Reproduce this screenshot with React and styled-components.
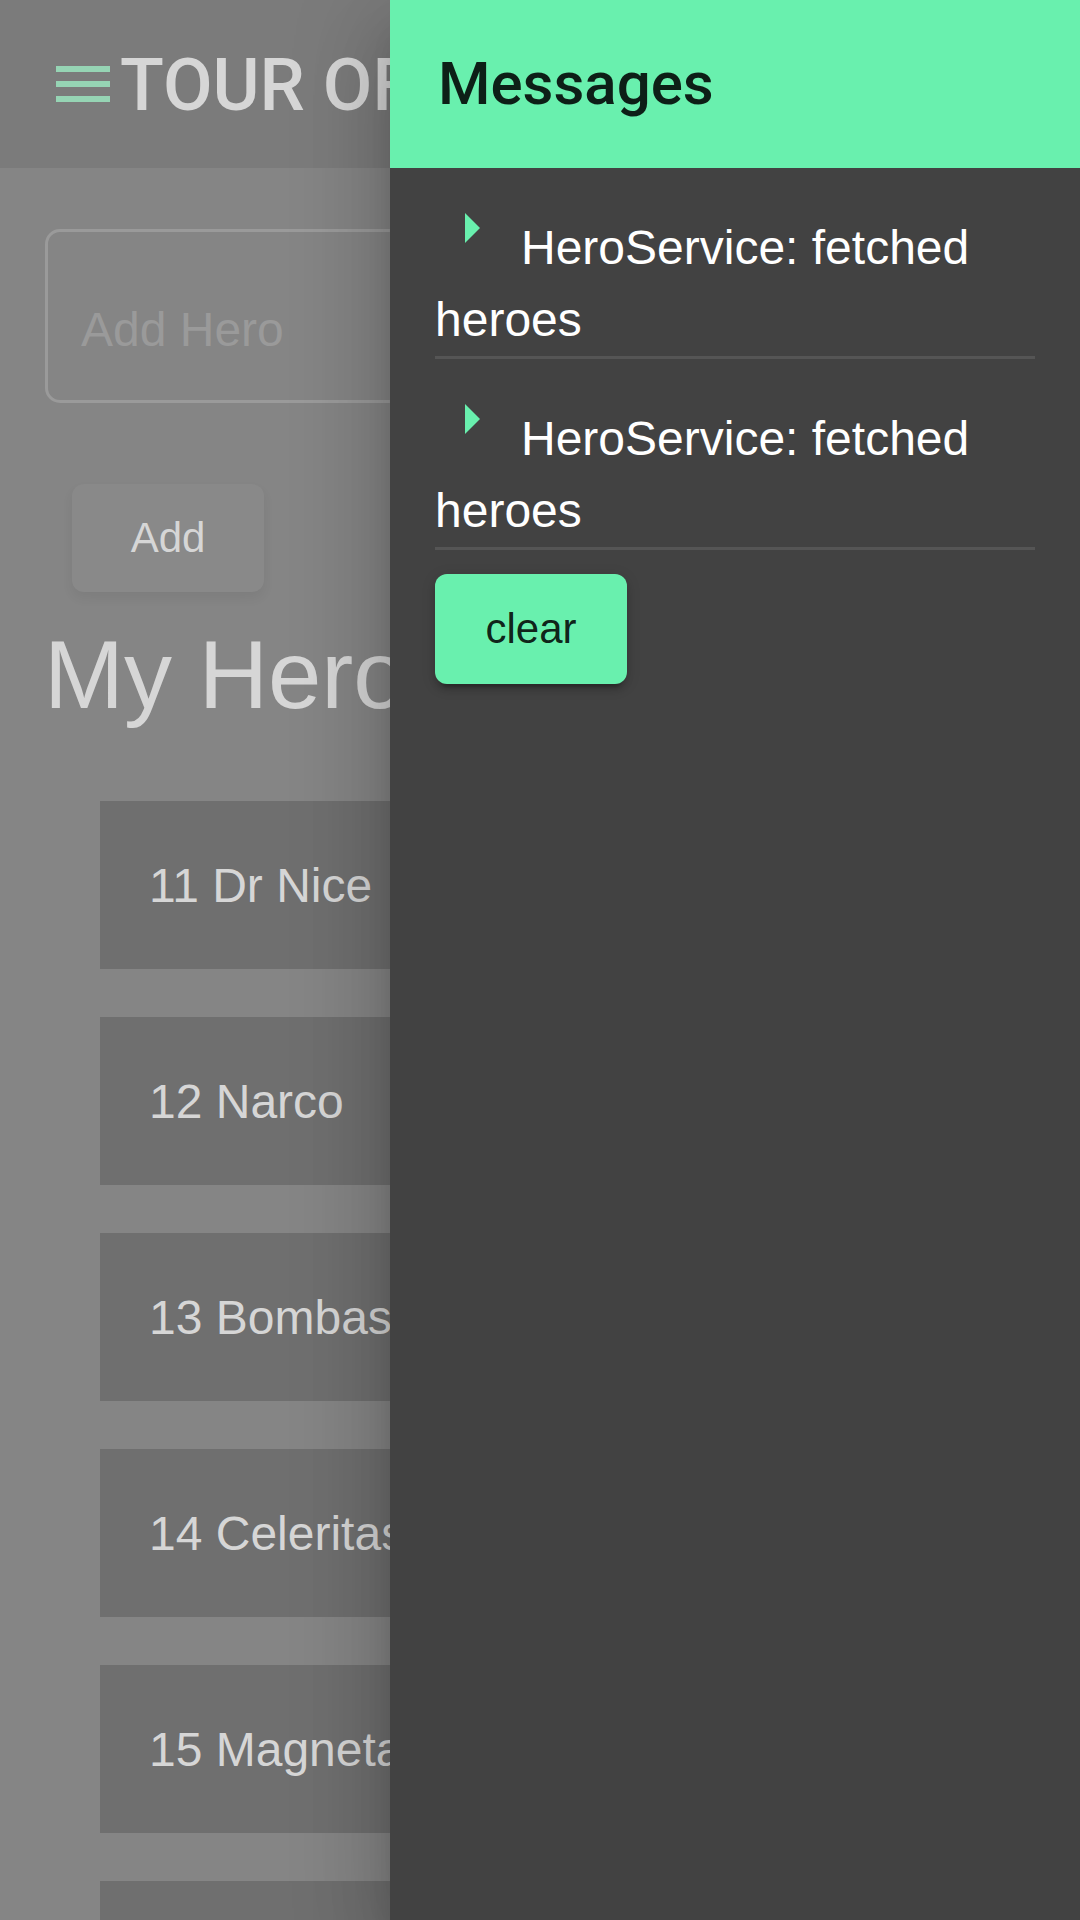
import React from 'react';
import styled, { createGlobalStyle } from 'styled-components';

const GlobalStyle = createGlobalStyle`
  html, body {
    margin: 0;
    padding: 0;
    background: #858585;
  }
  * {
    box-sizing: border-box;
  }
`;

const Screen = styled.div`
  position: relative;
  width: 1080px;
  height: 1920px;
  overflow: hidden;
  background: #858585;
  font-family: "Liberation Sans", Arial, sans-serif;
`;

const Toolbar = styled.header`
  display: flex;
  align-items: center;
  height: 168px;
  padding-left: 47px;
  background: #7b7b7b;
`;

const MenuIcon = styled.svg`
  width: 72px;
  height: 72px;
  flex-shrink: 0;
  fill: #96d4b4;
`;

const AppTitle = styled.h1`
  margin: 3px 0 0 1px;
  font-family: Roboto, "Liberation Sans", sans-serif;
  font-size: 72px;
  font-weight: 500;
  line-height: 1;
  color: #d6d6d6;
  white-space: nowrap;
`;

const Main = styled.main`
  padding: 61px 45px 0;
`;

const HeroInput = styled.input`
  display: block;
  width: 100%;
  height: 174px;
  margin: 0;
  padding: 26px 33px 0;
  border: 3px solid #9a9a9a;
  border-radius: 15px;
  background: transparent;
  font-family: "Liberation Sans", Arial, sans-serif;
  font-size: 48px;
  color: #d6d6d6;
  outline: none;

  &::placeholder {
    color: #9a9a9a;
  }
`;

const RaisedButton = styled.button`
  display: flex;
  align-items: center;
  justify-content: center;
  width: 192px;
  height: ${p => p.$height || 108}px;
  padding: 0;
  border: none;
  border-radius: 12px;
  background: ${p => p.$bg};
  color: ${p => p.$fg};
  font-family: "Liberation Sans", Arial, sans-serif;
  font-size: 42px;
  box-shadow: 0 9px 3px -6px rgba(0, 0, 0, 0.2), 0 6px 6px 0 rgba(0, 0, 0, 0.14),
    0 3px 15px 0 rgba(0, 0, 0, 0.12);
`;

const AddButton = styled(RaisedButton)`
  margin: 81px 0 0 27px;
  box-shadow: 0 6px 12px rgba(0, 0, 0, 0.06);
`;

const SectionTitle = styled.h2`
  margin: 28px 0 71px -1px;
  font-family: "Liberation Sans", Arial, sans-serif;
  font-size: 96px;
  font-weight: 400;
  line-height: normal;
  color: #d6d6d6;
  white-space: nowrap;
`;

const HeroList = styled.ul`
  display: flex;
  flex-direction: column;
  gap: 48px;
  margin: 0 0 0 55px;
  padding: 0;
  list-style: none;
`;

const HeroItem = styled.li`
  display: flex;
  align-items: center;
  height: 168px;
  padding-left: 49px;
  background: #6f6f6f;
  font-size: 48px;
  color: #d6d6d6;
  white-space: nowrap;
`;

const Drawer = styled.aside`
  position: absolute;
  top: 0;
  right: 0;
  width: 690px;
  height: 100%;
  background: #424242;
  box-shadow: 0 24px 30px -15px rgba(0, 0, 0, 0.2), 0 48px 72px 6px rgba(0, 0, 0, 0.14),
    0 18px 90px 15px rgba(0, 0, 0, 0.12);
`;

const DrawerHeader = styled.div`
  display: flex;
  align-items: center;
  height: 168px;
  padding-left: 48px;
  background: #69f0ae;
`;

const DrawerTitle = styled.h2`
  margin: 0;
  font-family: Roboto, "Liberation Sans", sans-serif;
  font-size: 60px;
  font-weight: 500;
  line-height: 1;
  color: rgba(0, 0, 0, 0.87);
`;

const DrawerBody = styled.div`
  padding: 0 45px;
`;

const MessageList = styled.ul`
  margin: 0;
  padding: 0;
  list-style: none;
`;

const MessageItem = styled.li`
  padding-top: 44px;
  border-bottom: 3px solid #555555;
  font-family: "Liberation Sans", Arial, sans-serif;
  font-size: 48px;
  line-height: 72px;
  color: #ffffff;
`;

const Marker = styled.span`
  display: inline-block;
  vertical-align: top;
  width: 0;
  height: 0;
  margin: 1px 41px 0 30px;
  border-left: 15px solid #69f0ae;
  border-top: 15px solid transparent;
  border-bottom: 15px solid transparent;
`;

const ClearButton = styled(RaisedButton)`
  margin-top: 24px;
`;

const heroes = [
  { id: 11, name: 'Dr Nice' },
  { id: 12, name: 'Narco' },
  { id: 13, name: 'Bombasto' },
  { id: 14, name: 'Celeritas' },
  { id: 15, name: 'Magneta' },
  { id: 16, name: 'RubberMan' },
];

const messages = ['HeroService: fetched heroes', 'HeroService: fetched heroes'];

export default function App() {
  return (
    <>
      <GlobalStyle />
      <Screen>
        <Toolbar>
          <MenuIcon viewBox="0 0 24 24">
            <path d="M3 18h18v-2H3v2zm0-5h18v-2H3v2zm0-7v2h18V6H3z" />
          </MenuIcon>
          <AppTitle>TOUR OF HEROES</AppTitle>
        </Toolbar>

        <Main>
          <HeroInput placeholder="Add Hero" />
          <AddButton $bg="#898989" $fg="#d6d6d6">Add</AddButton>
          <SectionTitle>My Heroes</SectionTitle>
          <HeroList>
            {heroes.map(h => (
              <HeroItem key={h.id}>
                {h.id} {h.name}
              </HeroItem>
            ))}
          </HeroList>
        </Main>

        <Drawer>
          <DrawerHeader>
            <DrawerTitle>Messages</DrawerTitle>
          </DrawerHeader>
          <DrawerBody>
            <MessageList>
              {messages.map((m, i) => (
                <MessageItem key={i}>
                  <Marker />
                  {m}
                </MessageItem>
              ))}
            </MessageList>
            <ClearButton $bg="#69f0ae" $fg="rgba(0, 0, 0, 0.87)" $height={110}>
              clear
            </ClearButton>
          </DrawerBody>
        </Drawer>
      </Screen>
    </>
  );
}
